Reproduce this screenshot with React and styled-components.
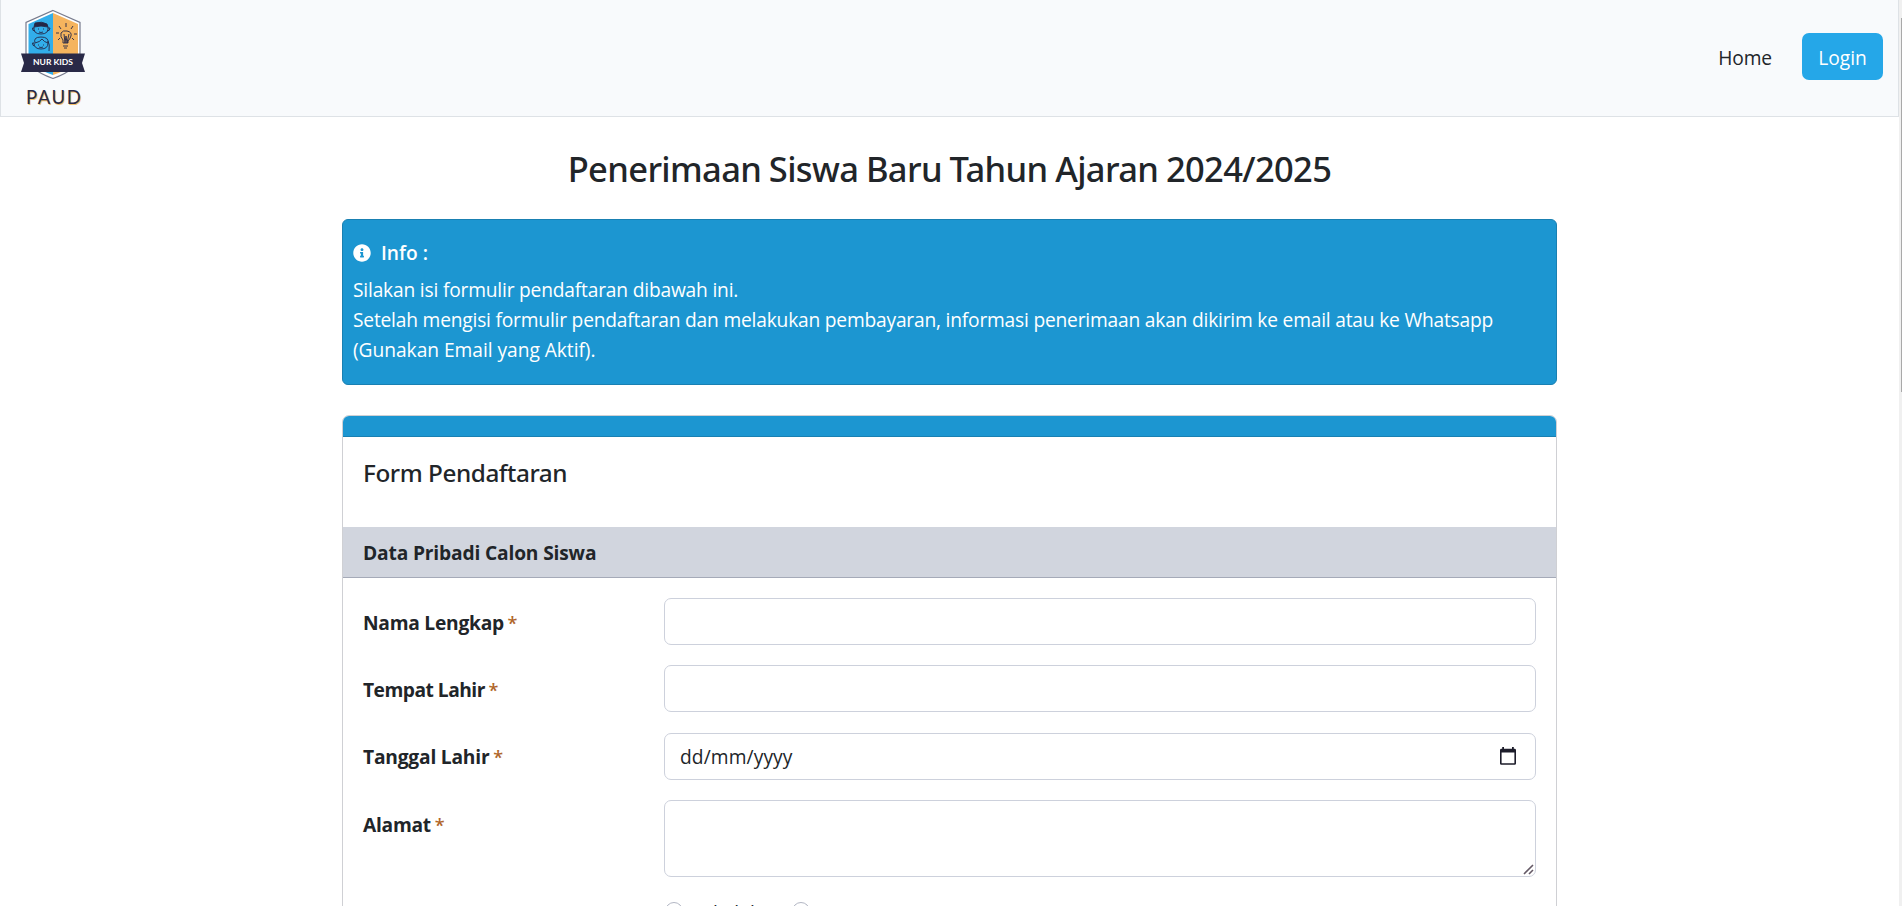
import React from "react";
import styled, { createGlobalStyle } from "styled-components";
import { FaInfoCircle } from "react-icons/fa";

const GlobalStyle = createGlobalStyle`
  *, *::before, *::after { box-sizing: border-box; }
  body {
    margin: 0;
    background: #fff;
    color: #212529;
    font-family: "Open Sans", "Noto Sans", sans-serif;
    font-size: 19.2px;
    line-height: 30px;
    overflow: hidden;
  }
  h1, h2, p { margin: 0; }
`;

const Viewport = styled.div`
  display: flex;
  height: 100vh;
  overflow: hidden;
`;

const Page = styled.div`
  flex: 1;
  min-width: 0;
  overflow: hidden;
`;

const ScrollTrack = styled.div`
  width: 3px;
  padding: 18px 0 0 2px;
  background: #f0f0f0;
`;

const ScrollThumb = styled.div`
  height: 374px;
  background: #a9a9a9;
`;

const Navbar = styled.header`
  display: flex;
  align-items: center;
  justify-content: space-between;
  height: 117px;
  padding: 0 15px 0 19px;
  background: #f8fafc;
  border: 1px solid #dee2e6;
  border-top: 0;
`;

const Brand = styled.a`
  display: flex;
  height: 116px;
`;

const NavLinks = styled.nav`
  display: flex;
  align-items: center;
  gap: 30px;
  padding-bottom: 4px;
`;

const NavLink = styled.a`
  padding-top: 4px;
  color: #212529;
  letter-spacing: -0.1px;
`;

const LoginButton = styled.button`
  width: 81px;
  height: 47px;
  padding: 4px 0 0;
  border: 0;
  border-radius: 7px;
  background: #25a7e8;
  color: #fff;
  font: inherit;
`;

const Container = styled.main`
  width: 1215px;
  margin: 0 auto;
  padding-top: 31px;
`;

const Title = styled.h1`
  height: 42px;
  margin-bottom: 29px;
  font: 500 34.5px/42px "Noto Sans", sans-serif;
  letter-spacing: -0.64px;
  word-spacing: -0.7px;
  text-align: center;
`;

const Alert = styled.section`
  height: 166px;
  padding: 18px 10px;
  margin-bottom: 30px;
  border: 1px solid #1980b2;
  border-radius: 6px;
  background: #1c96d1;
  color: #fff;
`;

const AlertHeading = styled.h2`
  display: flex;
  align-items: center;
  gap: 10px;
  margin-bottom: 7px;
  font-size: 19.2px;
  font-weight: 600;
  line-height: 30px;
`;

const AlertText = styled.p`
  letter-spacing: ${(p) => p.$tracking || "0"};
  white-space: nowrap;
`;

const Card = styled.section`
  height: 700px;
  border: 1px solid #cfd0d4;
  border-radius: 7px;
  overflow: hidden;
`;

const CardStripe = styled.div`
  height: 21px;
  border-bottom: 1px solid #1980b2;
  background: #1c96d1;
`;

const CardTitle = styled.h2`
  height: 90px;
  padding: 21px 20px 0;
  font: 500 24.3px/30px "Noto Sans", sans-serif;
  letter-spacing: -0.44px;
`;

const SectionHeading = styled.h2`
  height: 51px;
  padding: 11px 20px 9px;
  margin: 0 0 20px;
  border-bottom: 1px solid #a5aab8;
  background: #d1d5de;
  font-size: 19.2px;
  font-weight: 700;
  line-height: 30px;
  letter-spacing: -0.16px;
`;

const Form = styled.form`
  display: grid;
  gap: 20.4px;
  padding: 0 20px;
`;

const Row = styled.div`
  display: grid;
  grid-template-columns: 301px 1fr;
`;

const Label = styled.label`
  padding-top: 9.6px;
  font-weight: 700;
  letter-spacing: ${(p) => p.$tracking};
`;

const Required = styled.span`
  margin-left: -1px;
  color: #b0662a;
  font-size: 18px;
  font-weight: 600;
`;

const Input = styled.input`
  width: 100%;
  height: 47px;
  padding: 0 15px;
  border: 1px solid #cdd1dc;
  border-radius: 7px;
  outline: 0;
  background: #fff;
  font: inherit;
`;

const DateField = styled.div`
  display: flex;
  align-items: center;
  justify-content: space-between;
  height: 47px;
  padding: 0 19px 0 15px;
  border: 1px solid #cdd1dc;
  border-radius: 7px;
  letter-spacing: 0.1px;
`;

const DateText = styled.span`
  padding-top: 2px;
`;

const TextareaWrap = styled.div`
  position: relative;
  height: 77px;
`;

const Textarea = styled.textarea`
  display: block;
  width: 100%;
  height: 77px;
  border: 1px solid #cdd1dc;
  border-radius: 7px;
  resize: none;
`;

const Grip = styled.svg`
  position: absolute;
  right: 2px;
  bottom: 2px;
`;

const RadioGroup = styled.div`
  display: flex;
  gap: 26px;
  padding-top: 4px;
`;

const RadioOption = styled.label`
  display: flex;
  gap: 9px;
  padding-left: 1px;
`;

const Radio = styled.input`
  appearance: none;
  flex: none;
  width: 18px;
  height: 18px;
  margin: 0;
  border: 1px solid #b3b7c4;
  border-radius: 50%;
`;

const RadioText = styled.span`
  line-height: 21px;
  letter-spacing: 0.1px;
`;

function Logo() {
  return (
    <svg width="68" height="110" viewBox="20 0 68 110" aria-label="Nur Kids PAUD">
      <path d="M53 10.5 80 22.5V53Q80 69 53 78.5 26 69 26 53V22.5Z" fill="#fff" stroke="#777b8d" strokeWidth="1.2" />
      <path d="M53 13 28.5 24V54Q29 67 53 75Z" fill="#32aeea" />
      <path d="M53 13 78 24V54Q77 67 53 75Z" fill="#f5b45e" />
      <g fill="none" stroke="#242747" strokeWidth="0.9">
        <path d="M34 27Q33 34 41 34T48 27M34 28H32.5Q32 31 35 31M48 28H50Q50 31 47 31M38 29h1M43 29h1M39 32q2 1 4 0" />
        <path d="M34 27 35 23Q42 21 47 24L48 27Q41 25 34 27Z" fill="#242747" />
        <path d="M34 43Q34 49 41 49T48 43M35 43Q33 37 41 37T48 43Q44 42 42 39Q40 42 35 43M48 41Q50 44 49 51M38 45h1M43 45h1M39 47q2 1 4 0M34 43h-1.5q0 3 2 3" />
        <path d="M63 43V40Q60 37 61 33Q63 30 67 31Q72 32 71 36Q70 39 68 41V43ZM64 34 65 43 66 36 67 43 69 34M63 46H68M64 48H67" />
        <path d="M66 23V27M59 26 61 29M73 26 71 29M56 33H59M74 34H77M58 40 60 38M74 40 72 38" />
      </g>
      <path d="M21 53.5H85L82 63 85 72H21L24 63Z" fill="#292947" />
      <text x="33" y="65.4" fill="#fff" fontFamily="Lato, sans-serif" fontSize="8.4" fontWeight="700" textLength="40" lengthAdjust="spacingAndGlyphs">NUR KIDS</text>
      <text x="27" y="104.7" fill="#f2bf6c" fontFamily="Lato, sans-serif" fontSize="18.5" letterSpacing="1.6">PAUD</text>
      <text x="26" y="104" fill="#292947" fontFamily="Lato, sans-serif" fontSize="18.5" letterSpacing="1.6">PAUD</text>
    </svg>
  );
}

function CalendarIcon() {
  return (
    <svg width="16" height="18" viewBox="0 0 16 18">
      <path fillRule="evenodd" d="M2.2 0H4V1.8H12V0H13.8V1.8H14.6Q16 1.8 16 3.2V16.4Q16 17.8 14.6 17.8H1.4Q0 17.8 0 16.4V3.2Q0 1.8 1.4 1.8H2.2ZM1.6 5.6V16.2H14.4V5.6Z" fill="#1c1c2a" />
    </svg>
  );
}

function Field({ label, tracking, children }) {
  return (
    <Row>
      <Label $tracking={tracking}>
        {label} <Required>*</Required>
      </Label>
      {children}
    </Row>
  );
}

export default function App() {
  return (
    <Viewport>
      <GlobalStyle />
      <Page>
        <Navbar>
          <Brand><Logo /></Brand>
          <NavLinks>
            <NavLink>Home</NavLink>
            <LoginButton>Login</LoginButton>
          </NavLinks>
        </Navbar>
        <Container>
          <Title>Penerimaan Siswa Baru Tahun Ajaran 2024/2025</Title>
          <Alert>
            <AlertHeading><FaInfoCircle size={18} /> Info :</AlertHeading>
            <AlertText $tracking="-0.19px">Silakan isi formulir pendaftaran dibawah ini.</AlertText>
            <AlertText $tracking="-0.2px">
              Setelah mengisi formulir pendaftaran dan melakukan pembayaran, informasi penerimaan akan dikirim ke email atau ke Whatsapp
            </AlertText>
            <AlertText $tracking="-0.04px">(Gunakan Email yang Aktif).</AlertText>
          </Alert>
          <Card>
            <CardStripe />
            <CardTitle>Form Pendaftaran</CardTitle>
            <SectionHeading>Data Pribadi Calon Siswa</SectionHeading>
            <Form>
              <Field label="Nama Lengkap" tracking="-0.25px"><Input /></Field>
              <Field label="Tempat Lahir" tracking="-0.5px"><Input /></Field>
              <Field label="Tanggal Lahir" tracking="-0.2px">
                <DateField><DateText>dd/mm/yyyy</DateText><CalendarIcon /></DateField>
              </Field>
              <Field label="Alamat" tracking="-0.25px">
                <TextareaWrap>
                  <Textarea />
                  <Grip width="11" height="11" viewBox="0 0 11 11">
                    <path d="M1 10 10 1M6 10 10 6" stroke="#655a66" strokeWidth="1.6" />
                  </Grip>
                </TextareaWrap>
              </Field>
              <Row>
                <span />
                <RadioGroup>
                  <RadioOption><Radio type="radio" name="gender" /><RadioText>Laki-laki</RadioText></RadioOption>
                  <RadioOption><Radio type="radio" name="gender" aria-label="Perempuan" /></RadioOption>
                </RadioGroup>
              </Row>
            </Form>
          </Card>
        </Container>
      </Page>
      <ScrollTrack><ScrollThumb /></ScrollTrack>
    </Viewport>
  );
}
